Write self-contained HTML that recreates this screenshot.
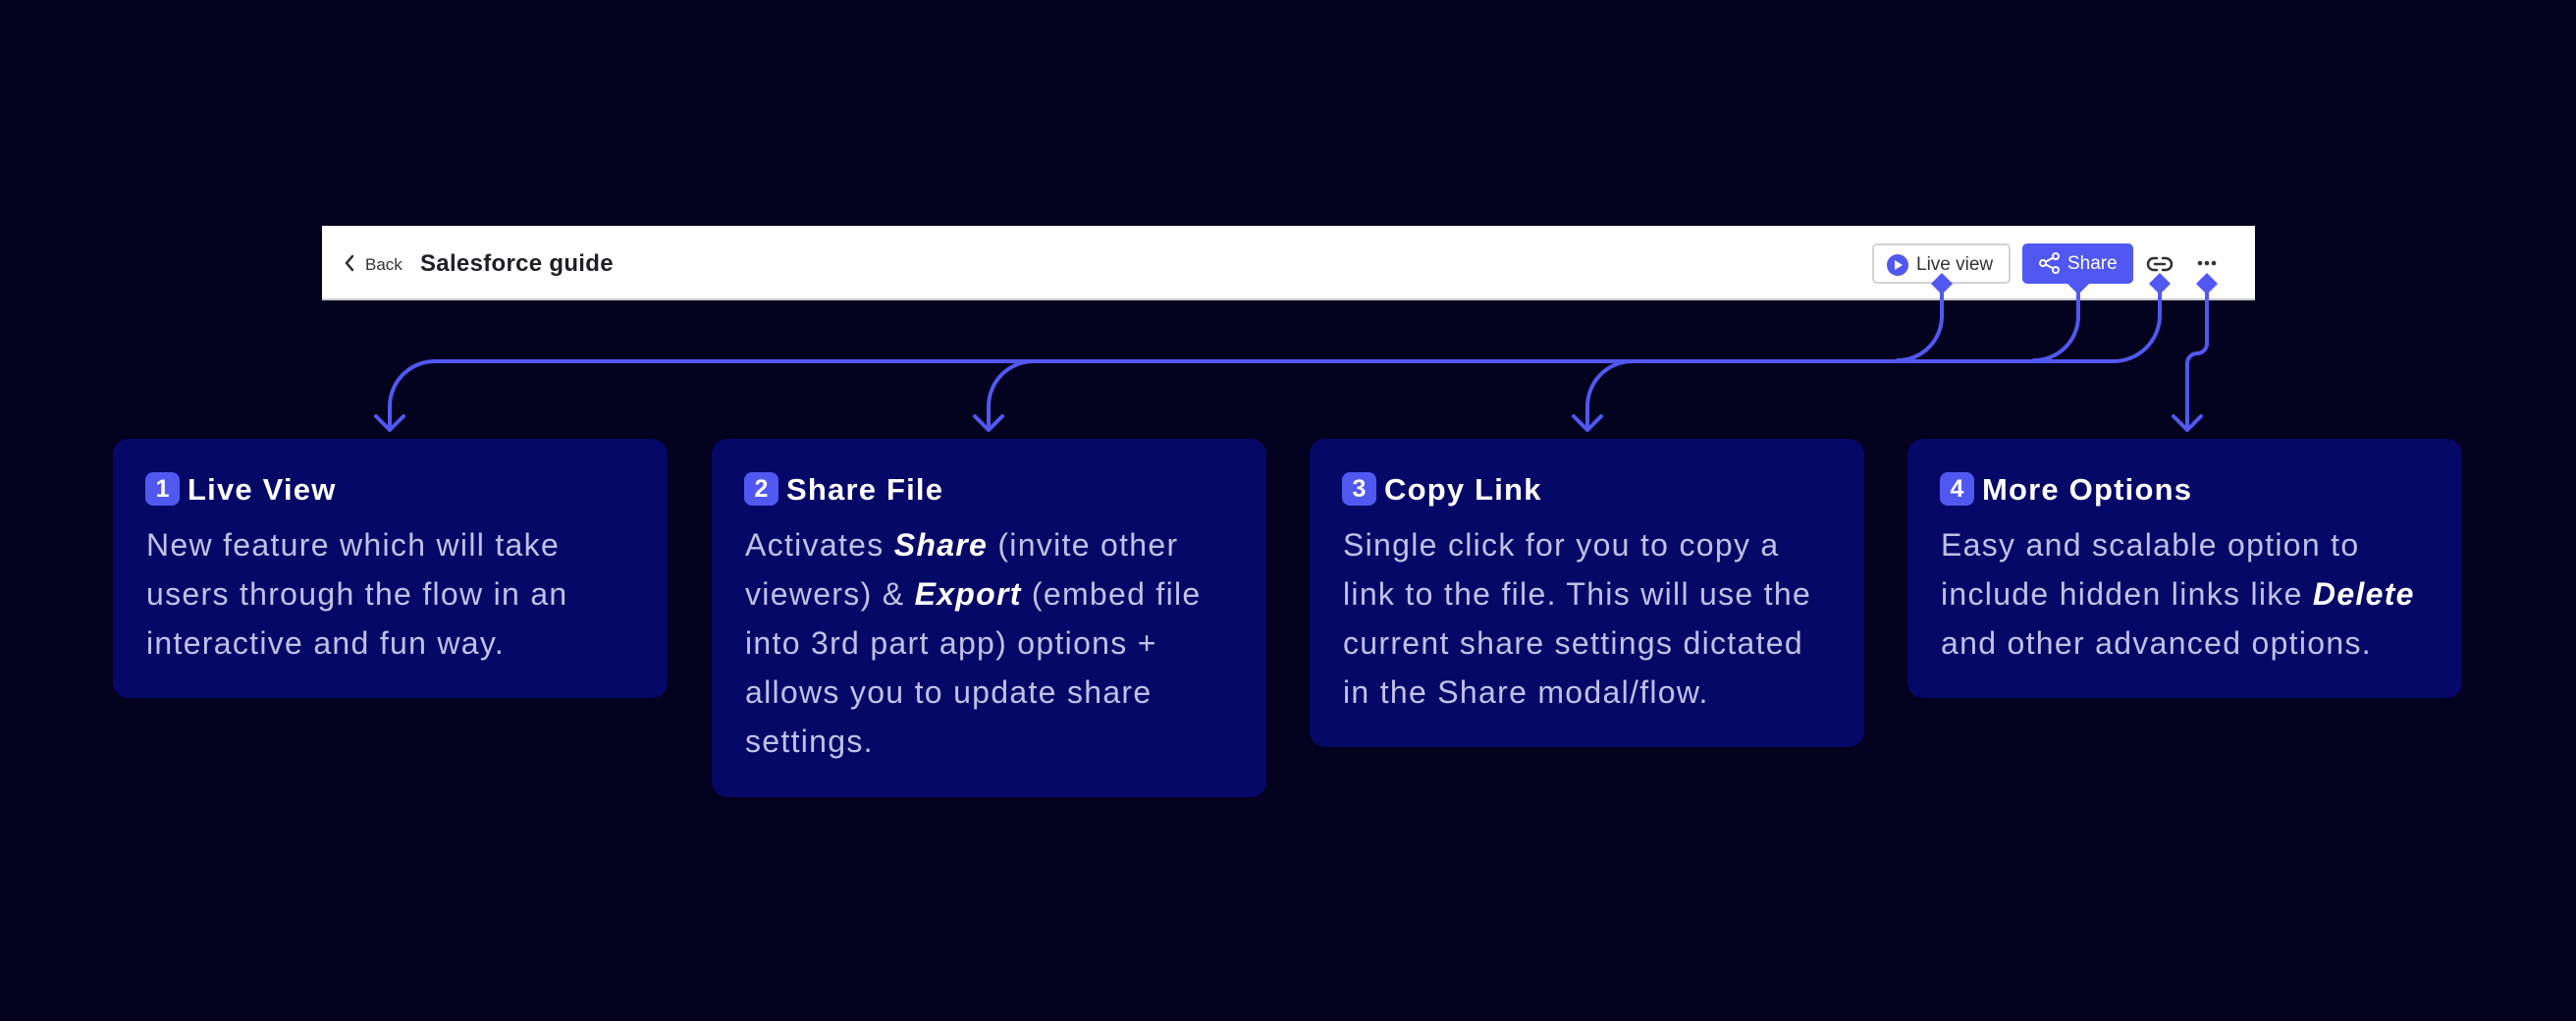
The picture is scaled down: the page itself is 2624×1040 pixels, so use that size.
<!DOCTYPE html>
<html><head><meta charset="utf-8"><style>
*{margin:0;padding:0;box-sizing:border-box}
body{width:2624px;height:1040px;background:#03021f;position:relative;overflow:hidden;font-family:"Liberation Sans",sans-serif}
.bar{position:absolute;left:328px;top:230px;width:1969px;height:76px;background:#fff;border-bottom:2px solid #c9c9cf}
.back{position:absolute;left:372px;top:260px;font-size:17px;color:#333}
.title{position:absolute;left:428px;top:255px;font-size:24px;font-weight:bold;color:#1f1f24;letter-spacing:0.3px}
.lv{position:absolute;left:1907px;top:248px;width:141px;height:41px;border:2px solid #d3d3d6;border-radius:5px;background:#fff}
.lv span{position:absolute;left:43px;top:9px;font-size:19px;color:#333}
.sh{position:absolute;left:2060px;top:248px;width:113px;height:41px;background:#5158f1;border-radius:5px}
.sh span{position:absolute;left:46px;top:10px;font-size:19px;color:#fff}
.card{position:absolute;top:447px;width:565px;background:#060868;border-radius:16px}
.card h3{position:absolute;left:33px;top:34px;font-size:31px;color:#fff;font-weight:bold;white-space:nowrap;line-height:36px;letter-spacing:1.2px}
.card h3 b{display:inline-block;width:35px;height:34px;background:#5158f1;border-radius:8px;text-align:center;font-size:25px;line-height:34px;margin-right:8px;vertical-align:top;letter-spacing:0}
.card p{position:absolute;left:34px;top:83px;font-size:32px;line-height:50px;color:#bfc1e6;letter-spacing:1.3px;white-space:nowrap}
.card p i{color:#fff;font-weight:bold}
</style></head><body>
<div class="bar"></div>
<svg style="position:absolute;left:0;top:0" width="2624" height="1040">
<path d="M359 261 L353 268 L359 275" fill="none" stroke="#333" stroke-width="2.5" stroke-linecap="round"/>
<path d="M2197 263 h-3 a6 6 0 0 0 0 12 h3 M2203 263 h3 a6 6 0 0 1 0 12 h-3 M2195 269 h10" fill="none" stroke="#333" stroke-width="2.5" stroke-linecap="round"/>
<circle cx="2241" cy="268" r="2.3" fill="#333"/><circle cx="2248" cy="268" r="2.3" fill="#333"/><circle cx="2255" cy="268" r="2.3" fill="#333"/>
<g fill="none" stroke="#5158f1" stroke-width="4" stroke-linecap="round" stroke-linejoin="round">
<path d="M1978 289 V322 A45 45 0 0 1 1933 367"/>
<path d="M2117 289 V322 A45 45 0 0 1 2072 367"/>
<path d="M2200 289 V321 A47 47 0 0 1 2153 368 L443 368"/>
<path d="M443 368 A46 46 0 0 0 397 414 V438 M383 424 L397 438 L411 424"/>
<path d="M1053 368 A46 46 0 0 0 1007 414 V438 M993 424 L1007 438 L1021 424"/>
<path d="M1663 368 A46 46 0 0 0 1617 414 V438 M1603 424 L1617 438 L1631 424"/>
<path d="M2248 289 V350 A10 10 0 0 1 2238 360 A10 10 0 0 0 2228 370 V438 M2214 424 L2228 438 L2242 424"/>
</g>
</svg>
<div class="back">Back</div>
<div class="title">Salesforce guide</div>
<div class="lv"><svg style="position:absolute;left:13px;top:9px" width="22" height="22"><circle cx="11" cy="11" r="11" fill="#5158f1"/><path d="M8 6 L16 11 L8 16Z" fill="#fff"/></svg><span>Live view</span></div>
<div class="sh"><svg style="position:absolute;left:16px;top:8px" width="24" height="24" fill="none" stroke="#fff" stroke-width="2"><circle cx="18" cy="5" r="3"/><circle cx="5" cy="12" r="3"/><circle cx="18" cy="19" r="3"/><path d="M8 10.5 L15.5 6.5 M8 13.5 L15.5 17.5"/></svg><span>Share</span></div>
<svg style="position:absolute;left:0;top:0" width="2624" height="1040">
<g fill="#5158f1">
<path d="M1978 278 L1989 289 L1978 300 L1967 289Z"/>
<path d="M2106 289 L2128 289 L2117 300Z"/>
<path d="M2200 278 L2211 289 L2200 300 L2189 289Z"/>
<path d="M2248 278 L2259 289 L2248 300 L2237 289Z"/>
</g></svg>
<div class="card" style="left:115px;height:264px"><h3><b>1</b>Live View</h3><p>New feature which will take<br>users through the flow in an<br>interactive and fun way.</p></div>
<div class="card" style="left:725px;height:365px"><h3><b>2</b>Share File</h3><p>Activates <i>Share</i> (invite other<br>viewers) &amp; <i>Export</i> (embed file<br>into 3rd part app) options +<br>allows you to update share<br>settings.</p></div>
<div class="card" style="left:1334px;height:314px"><h3><b>3</b>Copy Link</h3><p>Single click for you to copy a<br>link to the file. This will use the<br>current share settings dictated<br>in the Share modal/flow.</p></div>
<div class="card" style="left:1943px;height:264px"><h3><b>4</b>More Options</h3><p>Easy and scalable option to<br>include hidden links like <i>Delete</i><br>and other advanced options.</p></div>
</body></html>
